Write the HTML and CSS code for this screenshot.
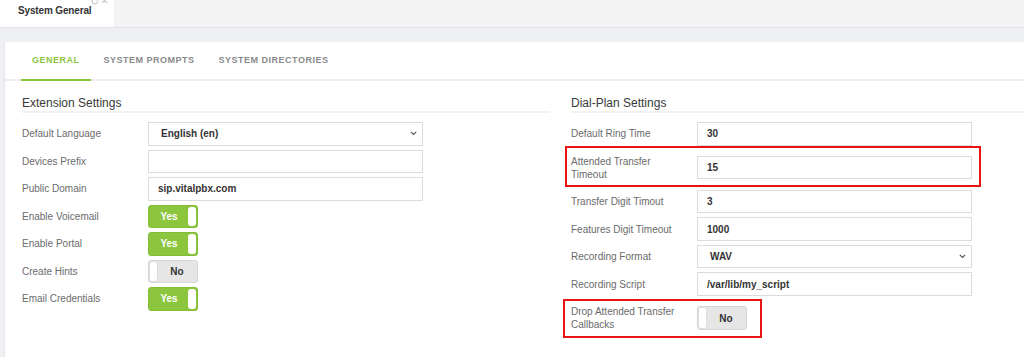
FILE: index.html
```html
<!DOCTYPE html>
<html lang="en">
<head>
<meta charset="utf-8">
<title>System General</title>
<link rel="stylesheet" href="styles.css">
</head>
<body>
<div class="topbar">
  <div class="doc-tab">
    <span class="doc-title">System General</span>
    <span class="doc-actions">
      <svg class="ico" width="8" height="8" viewBox="0 0 8 8"><path d="M6.6 2.2A3 3 0 1 0 7 4.4" fill="none" stroke="#c9c9c9" stroke-width="1.2"/><path d="M7.2 0.4v2.4H4.8" fill="none" stroke="#c9c9c9" stroke-width="1.2"/></svg>
      <svg class="ico" width="7" height="7" viewBox="0 0 7 7"><path d="M1 1l5 5M6 1L1 6" stroke="#c9c9c9" stroke-width="1.2"/></svg>
    </span>
  </div>
</div>
<div class="band"></div>
<div class="card">
  <nav class="tabs">
    <a class="tab active">GENERAL</a>
    <a class="tab">SYSTEM PROMPTS</a>
    <a class="tab">SYSTEM DIRECTORIES</a>
  </nav>
  <div class="columns">
    <section class="col">
      <h3 class="sec-title">Extension Settings</h3>
      <div class="row"><label class="lbl">Default Language</label><div class="field select"><span>English (en)</span><svg class="chev" width="7" height="5" viewBox="0 0 7 5"><path d="M0.8 0.8l2.7 2.7L6.2 0.8" fill="none" stroke="#555" stroke-width="1.2"/></svg></div></div>
      <div class="row"><label class="lbl">Devices Prefix</label><div class="field"></div></div>
      <div class="row"><label class="lbl">Public Domain</label><div class="field">sip.vitalpbx.com</div></div>
      <div class="row"><label class="lbl">Enable Voicemail</label><div class="toggle on"><span class="tg-text">Yes</span><span class="knob"></span></div></div>
      <div class="row"><label class="lbl">Enable Portal</label><div class="toggle on"><span class="tg-text">Yes</span><span class="knob"></span></div></div>
      <div class="row"><label class="lbl">Create Hints</label><div class="toggle off"><span class="knob"></span><span class="tg-text">No</span></div></div>
      <div class="row"><label class="lbl">Email Credentials</label><div class="toggle on"><span class="tg-text">Yes</span><span class="knob"></span></div></div>
    </section>
    <section class="col">
      <h3 class="sec-title">Dial-Plan Settings</h3>
      <div class="row"><label class="lbl">Default Ring Time</label><div class="field">30</div></div>
      <div class="row hl hl-att"><label class="lbl">Attended Transfer Timeout</label><div class="field">15</div></div>
      <div class="row"><label class="lbl">Transfer Digit Timout</label><div class="field">3</div></div>
      <div class="row"><label class="lbl">Features Digit Timeout</label><div class="field">1000</div></div>
      <div class="row"><label class="lbl">Recording Format</label><div class="field select"><span>WAV</span><svg class="chev" width="7" height="5" viewBox="0 0 7 5"><path d="M0.8 0.8l2.7 2.7L6.2 0.8" fill="none" stroke="#555" stroke-width="1.2"/></svg></div></div>
      <div class="row"><label class="lbl">Recording Script</label><div class="field">/var/lib/my_script</div></div>
      <div class="row hl hl-drop"><label class="lbl">Drop Attended Transfer Callbacks</label><div class="toggle off"><span class="knob"></span><span class="tg-text">No</span></div></div>
    </section>
  </div>
</div>
</body>
</html>
```
FILE: styles.css
```css
html, body {
  margin: 0;
  padding: 0;
}
body {
  width: 1024px;
  height: 357px;
  overflow: hidden;
  background: #eef0f3;
  font-family: "Liberation Sans", Arial, sans-serif;
  color: #333;
}
.topbar {
  height: 27px;
  background: #f4f4f4;
  border-bottom: 1px solid #e2e2e2;
  display: flex;
}
.doc-tab {
  position: relative;
  width: 114px;
  height: 27px;
  background: #fff;
  padding-left: 18px;
  box-sizing: border-box;
}
.doc-title {
  display: block;
  font-size: 10px;
  font-weight: bold;
  line-height: 22px;
  color: #333;
  letter-spacing: -0.15px;
}
.doc-actions {
  position: absolute;
  top: -3px;
  left: 91px;
  display: flex;
  gap: 2px;
  align-items: flex-start;
}
.ico { display: block; }
.band {
  height: 14px;
}
.card {
  margin-left: 4px;
  border-left: 1px solid #e4e6e8;
  background: #fff;
  height: 320px;
  overflow: hidden;
}
.tabs {
  display: flex;
  border-bottom: 2px solid #eeeeee;
  padding-left: 16px;
}
.tab {
  display: block;
  padding: 0 11px;
  margin-right: 2px;
  height: 37px;
  line-height: 37px;
  font-size: 9px;
  font-weight: bold;
  letter-spacing: 0.5px;
  color: #8a8a8a;
  border-bottom: 2px solid transparent;
  margin-bottom: -2px;
}
.tab.active {
  color: #8cc63f;
  border-bottom-color: #8cc63f;
}
.columns {
  display: grid;
  grid-template-columns: 528px 528px;
  column-gap: 21px;
  padding-left: 17px;
}
.sec-title {
  margin: 14px 0 9px;
  font-size: 12px;
  font-weight: normal;
  line-height: 16px;
  color: #3a3a3a;
  border-bottom: 2px solid #f2f2f2;
}
.row {
  display: flex;
  align-items: center;
  width: 401px;
  margin-bottom: 4px;
}
.lbl {
  width: 126px;
  flex: none;
  box-sizing: border-box;
  padding: 5px 14px 5px 0;
  font-size: 10px;
  line-height: 13.2px;
  color: #6b6b6b;
}
.field {
  width: 275px;
  height: 23.5px;
  box-sizing: border-box;
  border: 1px solid #dcdcdc;
  padding-left: 9px;
  display: flex;
  align-items: center;
  font-size: 10px;
  font-weight: bold;
  color: #333;
}
.select {
  padding-left: 12px;
  padding-right: 5px;
  justify-content: space-between;
}
.chev { display: block; }
.toggle {
  width: 50px;
  height: 23.5px;
  box-sizing: border-box;
  border-radius: 3px;
  display: flex;
  align-items: stretch;
  padding: 1px;
  font-size: 10px;
  font-weight: bold;
}
.toggle.on {
  background: #8cc63f;
  border: 1px solid #84bd38;
  color: #fff;
}
.toggle.off {
  background: #e6e6e6;
  border: 1px solid #d6d6d6;
  color: #333;
}
.tg-text {
  flex: 1;
  display: flex;
  align-items: center;
  justify-content: center;
}
.knob {
  width: 8px;
  background: #fff;
  border-radius: 3px;
  flex: none;
}
.toggle.off .knob {
  margin: -1px 0 -1px -1px;
  border: 1px solid #dedede;
  width: 7px;
}
.hl {
  position: relative;
}
.hl::after {
  content: "";
  position: absolute;
  border: 2px solid #e81414;
  pointer-events: none;
}
.hl-att::after {
  top: -3.5px;
  bottom: -0.7px;
  left: -6px;
  right: -9px;
}
.hl-drop::after {
  top: -1px;
  bottom: -2px;
  left: -8px;
  right: 210px;
}
```
